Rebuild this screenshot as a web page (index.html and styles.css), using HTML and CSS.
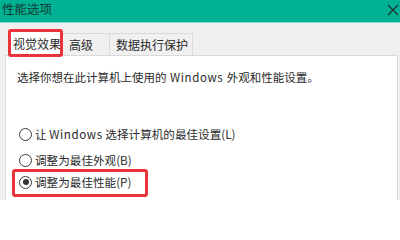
FILE: index.html
```html
<!DOCTYPE html>
<html lang="zh-CN">
<head>
<meta charset="utf-8">
<title>性能选项</title>
<link rel="stylesheet" href="styles.css">
</head>
<body>
<div class="window">
  <div class="titlebar">
    <span class="title">性能选项</span>
    <svg class="close" width="12" height="12" viewBox="0 0 12 12"><path d="M1 1 L11 11 M11 1 L1 11" stroke="#1d3b35" stroke-width="1.4" fill="none"/></svg>
  </div>
  <div class="content">
    <div class="tabs">
      <div class="tab active">视觉效果</div>
      <div class="tab t2">高级</div>
      <div class="tab t3">数据执行保护</div>
    </div>
    <div class="panel">
      <p class="intro">选择你想在此计算机上使用的 <span class="latin">Windows</span> 外观和性能设置。</p>
      <div class="options">
        <label class="opt o1"><span class="radio"></span>让 <span class="latin">Windows</span> 选择计算机的最佳设置(L)</label>
        <label class="opt o2"><span class="radio"></span>调整为最佳外观(B)</label>
        <label class="opt o3"><span class="radio checked"></span>调整为最佳性能(P)</label>
      </div>
    </div>
  </div>
  <div class="mark mark-tab"></div>
  <div class="mark mark-opt"></div>
</div>
</body>
</html>
```
FILE: styles.css
```css
* {
  box-sizing: border-box;
}
html, body {
  margin: 0;
  padding: 0;
}
body {
  width: 400px;
  height: 200px;
  overflow: hidden;
  font-family: "Noto Sans CJK SC", "Noto Sans", sans-serif;
  color: #2a2a2a;
}
.window {
  position: relative;
  width: 400px;
  height: 200px;
  overflow: hidden;
  background-color: #f0f0f0;
}
.titlebar {
  height: 23px;
  background-color: #00b294;
  border-bottom: 1px solid #86dccd;
  display: flex;
  align-items: center;
  justify-content: space-between;
  padding: 0 1px 3px 2px;
}
.title {
  font-size: 12.5px;
  color: #163a33;
  line-height: 1;
}
.close {
  display: block;
  margin-top: 1px;
}
.content {
  padding: 7px 2px 0 5px;
}
.tabs {
  display: flex;
  align-items: flex-end;
  height: 25px;
  padding-left: 3px;
  position: relative;
  z-index: 1;
}
.tab {
  height: 22px;
  border: 1px solid #d9d9d9;
  border-bottom: none;
  border-left: none;
  background-color: #f0f0f0;
  font-size: 12px;
  line-height: 21px;
  padding-left: 6px;
  white-space: nowrap;
}
.tab.active {
  width: 55px;
  height: 26px;
  border-left: 1px solid #d9d9d9;
  background-color: #ffffff;
  padding-left: 4px;
  line-height: 25px;
  margin-bottom: -1px;
}
.tab.t2 { width: 47px; }
.tab.t3 { width: 83px; }
.panel {
  height: 160px;
  background-color: #ffffff;
  border: 1px solid #d9d9d9;
  padding: 13px 0 0 11px;
}
.intro {
  margin: 0;
  font-size: 11.5px;
  line-height: 16px;
  word-spacing: 1px;
}
.latin { letter-spacing: 0.6px; }
.options {
  margin-top: 41px;
  display: flex;
  flex-direction: column;
}
.opt {
  display: flex;
  align-items: center;
  height: 16px;
  font-size: 11.6px;
  margin-left: 2px;
  white-space: pre;
}
.o2 { margin-top: 10px; }
.o3 { margin-top: 6px; }
.radio {
  width: 13px;
  height: 13px;
  border: 1px solid #3a3a3a;
  border-radius: 50%;
  background-color: #ffffff;
  margin-right: 3px;
  display: flex;
  align-items: center;
  justify-content: center;
  flex: none;
}
.radio.checked::after {
  content: "";
  width: 6px;
  height: 6px;
  border-radius: 50%;
  background-color: #333333;
}
.mark {
  position: absolute;
  border: 3px solid #e8333b;
  border-radius: 3px;
  z-index: 5;
}
.mark-tab { left: 8px; top: 29px; width: 55px; height: 28px; }
.mark-opt { left: 12px; top: 169px; width: 136px; height: 28px; }
```
